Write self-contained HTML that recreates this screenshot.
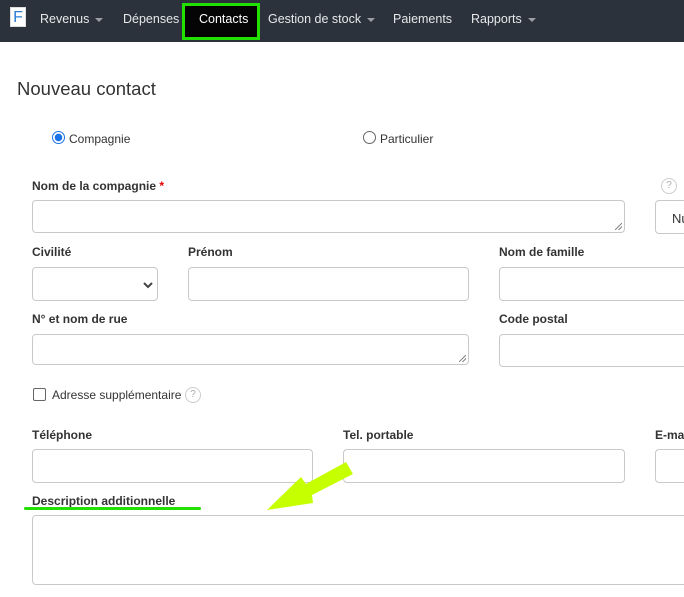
<!DOCTYPE html>
<html><head><meta charset="utf-8"><style>
*{box-sizing:border-box;margin:0;padding:0}
body{width:684px;height:597px;overflow:hidden;background:#fff;font-family:"Liberation Sans",Arial,sans-serif;position:relative;color:#333}
.nav{position:absolute;left:0;top:0;width:684px;height:42px;background:#2b323c}
.ni{position:absolute;top:11px;font-size:12.5px;color:#e6e8ea;line-height:16px;white-space:nowrap}
.car{display:inline-block;width:0;height:0;border-left:4px solid transparent;border-right:4px solid transparent;border-top:4px solid #9aa0a6;vertical-align:middle;margin-left:6px}
.a{position:absolute}
.lb{position:absolute;font-size:12px;font-weight:bold;color:#333;white-space:nowrap;line-height:14px}
.in{position:absolute;border:1px solid #c9c9c9;border-radius:4px;background:#fff}
.q{position:absolute;width:16px;height:16px;border:1px solid #ccc;border-radius:50%;font-size:10px;color:#aaa;text-align:center;line-height:14px}
.rs{position:absolute;right:2px;bottom:2px;width:7px;height:7px;background:linear-gradient(135deg,transparent 45%,#888 45%,#888 55%,transparent 55%,transparent 70%,#888 70%,#888 80%,transparent 80%)}
</style></head><body>
<div class="nav">
 <div class="a" style="left:10px;top:7px;width:16px;height:20px;background:#fff;border:1px solid #ddd;color:#2a7fd4;font-size:16px;text-align:center;line-height:19px">F</div>
 <div class="ni" style="left:40px">Revenus<span class="car"></span></div>
 <div class="ni" style="left:123px">Dépenses</div>
 <div class="a" style="left:182px;top:3px;width:78px;height:37px;background:#050505;border:3px solid #22e000"></div>
 <div class="ni" style="left:199px;color:#fff">Contacts</div>
 <div class="ni" style="left:268px">Gestion de stock<span class="car"></span></div>
 <div class="ni" style="left:393px">Paiements</div>
 <div class="ni" style="left:471px">Rapports<span class="car"></span></div>
</div>
<div class="a" style="left:17px;top:78px;font-size:18.5px;color:#333;line-height:22px">Nouveau contact</div>

<div class="a" style="left:52px;top:131px;width:13px;height:13px;border-radius:50%;border:1px solid #1a73e8;background:radial-gradient(circle,#1a73e8 3.5px,#fff 4px)"></div>
<div class="a" style="left:69px;top:132px;font-size:12px;line-height:14px">Compagnie</div>
<div class="a" style="left:363px;top:131px;width:13px;height:13px;border-radius:50%;border:1px solid #666"></div>
<div class="a" style="left:380px;top:132px;font-size:12px;line-height:14px">Particulier</div>

<div class="lb" style="left:32px;top:179px">Nom de la compagnie <span style="color:#e00">*</span></div>
<div class="in" style="left:32px;top:200px;width:593px;height:33px"><div class="rs"></div></div>
<div class="q" style="left:661px;top:178px">?</div>
<div class="in" style="left:655px;top:200px;width:60px;height:34px"><span class="a" style="left:16px;top:10px;font-size:13px;color:#333">Nu</span></div>

<div class="lb" style="left:32px;top:245px">Civilité</div>
<div class="in" style="left:32px;top:267px;width:126px;height:34px"><svg class="a" style="left:110px;top:14px" width="10" height="7" viewBox="0 0 10 7"><path d="M1 1l4 4 4-4" stroke="#444" stroke-width="2" fill="none"/></svg></div>
<div class="lb" style="left:188px;top:245px">Prénom</div>
<div class="in" style="left:188px;top:267px;width:281px;height:34px"></div>
<div class="lb" style="left:499px;top:245px">Nom de famille</div>
<div class="in" style="left:499px;top:267px;width:220px;height:34px"></div>

<div class="lb" style="left:32px;top:312px">N° et nom de rue</div>
<div class="in" style="left:32px;top:334px;width:437px;height:31px"><div class="rs"></div></div>
<div class="lb" style="left:499px;top:312px">Code postal</div>
<div class="in" style="left:499px;top:334px;width:220px;height:33px"></div>

<div class="a" style="left:33px;top:388px;width:13px;height:13px;border:1px solid #666;border-radius:2px"></div>
<div class="a" style="left:52px;top:388px;font-size:12px;line-height:14px">Adresse supplémentaire</div>
<div class="q" style="left:185px;top:387px">?</div>

<div class="lb" style="left:32px;top:428px">Téléphone</div>
<div class="in" style="left:32px;top:449px;width:281px;height:34px"></div>
<div class="lb" style="left:343px;top:428px">Tel. portable</div>
<div class="in" style="left:343px;top:449px;width:282px;height:34px"></div>
<div class="lb" style="left:655px;top:428px">E-mail</div>
<div class="in" style="left:655px;top:449px;width:60px;height:34px"></div>

<div class="lb" style="left:32px;top:494px">Description additionnelle</div>
<div class="a" style="left:24px;top:507px;width:177px;height:3px;background:#22e000;border-radius:2px"></div>
<div class="in" style="left:32px;top:515px;width:680px;height:70px"></div>
<svg class="a" style="left:0;top:0" width="684" height="597"><polygon points="267,510 301,477 306,484 346,462 353,474 312,495 313,503" fill="#c6ff00"/></svg>
</body></html>
